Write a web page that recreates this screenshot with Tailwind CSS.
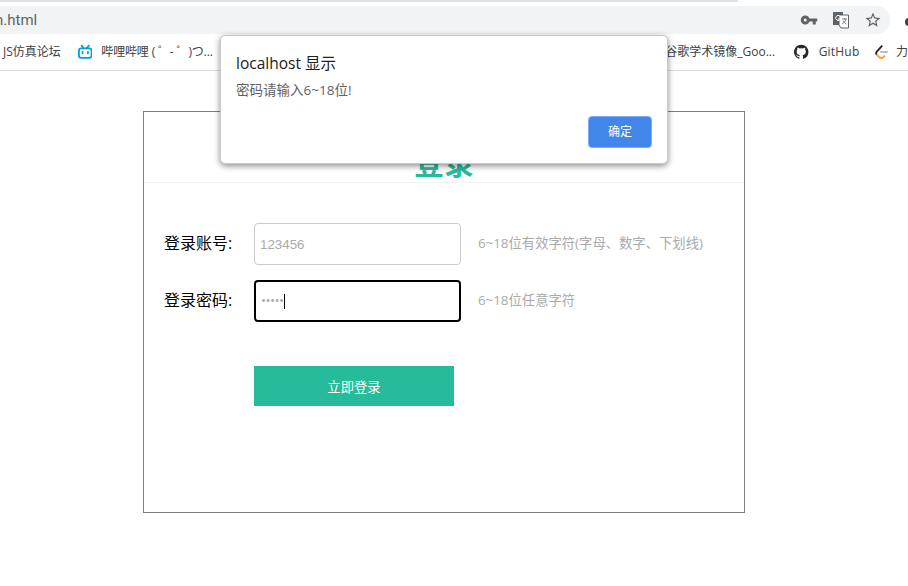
<!DOCTYPE html>
<html lang="zh-CN">
<head>
    <meta charset="UTF-8">
    <title>登录</title>
    <script src="https://cdn.jsdelivr.net/npm/@tailwindcss/browser@4"></script>
</head>
<body class="relative w-[908px] h-[586px] overflow-hidden bg-white font-['Open_Sans','Noto_Sans_CJK_SC',sans-serif]">
    <!-- browser chrome -->
    <div class="h-[71px] border-b border-[#dadce0] overflow-hidden">
        <div class="h-[2px] w-[738px] bg-[#dee1e6]"></div>
        <div class="flex mt-[4px]">
            <div class="w-[890px] shrink-0 h-[28px] bg-[#f1f3f4] rounded-r-[14px] flex items-center">
                <span class="ml-[-5px] text-[15px] font-['Roboto',sans-serif] text-[#5f6368]">n.html</span>
                <div class="ml-auto flex items-center gap-[14px] pr-[8px]">
                    <svg class="w-[18px] h-[18px]" viewBox="0 0 24 24" fill="#5f6368"><path d="M12.65 10A6 6 0 0 0 7 6a6 6 0 0 0 0 12 6 6 0 0 0 5.65-4H17v4h4v-4h2v-4H12.65zM7 14a2 2 0 1 1 0-4 2 2 0 0 1 0 4z"/></svg>
                    <svg class="w-[18px] h-[18px]" viewBox="0 0 18 18"><rect x="1" y="1" width="10" height="13" fill="#5f6368"/><path d="M7 4h9.500v13H9L7 14z" fill="#fff" stroke="#5f6368"/><path d="M10 8h5M12.500 7v1M14 8c-.5 2-2 4-4 5M11 9.500c.7 1.500 2 2.800 3.500 3.500" stroke="#5f6368" fill="none" stroke-width=".8"/><path d="M8 5.200A2.500 2.500 0 1 0 8.500 8H6" stroke="#fff" fill="none"/></svg>
                    <svg class="w-[18px] h-[18px]" viewBox="0 0 24 24" fill="#5f6368"><path d="M22 9.240l-7.190-.62L12 2 9.190 8.630 2 9.240l5.460 4.730L5.820 21 12 17.270 18.180 21l-1.630-7.030L22 9.240zM12 15.400l-3.760 2.270 1-4.280-3.320-2.880 4.380-.38L12 6.100l1.710 4.040 4.380.38-3.320 2.880 1 4.280L12 15.400z"/></svg>
                </div>
            </div>
            <div class="ml-[15px] w-[8px] h-[8px] shrink-0 mt-[12px] rounded-full bg-[#3c4043]"></div>
        </div>
        <div class="h-[36px] flex items-center text-[12px] text-[#3c4043] whitespace-nowrap">
            <span class="ml-[3px]">JS仿真论坛</span>
            <svg class="ml-[17px] w-[16px] h-[16px]" viewBox="0 0 16 16" fill="none" stroke="#00a1d6" stroke-width="2"><rect x="1" y="4" width="14" height="10.500" rx="2.500"/><path d="M4 1l2.500 3M12 1L9.500 4" stroke-linecap="round"/><path d="M5 8v1.500M11 8v1.500" stroke-linecap="round"/></svg>
            <span class="ml-[9px] w-[111px] tracking-[-0.15px]">哔哩哔哩 ( ゜- ゜)つ...</span>
            <span class="ml-[453px]">谷歌学术镜像_Goo...</span>
            <svg class="ml-[19px] w-[16px] h-[16px]" viewBox="0 0 16 16" fill="#24292e"><path d="M8 0C3.580 0 0 3.580 0 8c0 3.540 2.290 6.530 5.470 7.590.4.070.55-.17.55-.38 0-.19-.01-.82-.01-1.490-2.010.37-2.530-.49-2.690-.94-.09-.23-.48-.94-.82-1.130-.28-.15-.68-.52-.01-.53.630-.01 1.080.58 1.230.82.720 1.210 1.870.870 2.330.66.070-.52.280-.87.510-1.070-1.780-.2-3.640-.89-3.640-3.950 0-.87.31-1.590.82-2.150-.08-.2-.36-1.020.08-2.120 0 0 .67-.21 2.200.82a7.500 7.500 0 0 1 4 0c1.530-1.040 2.200-.82 2.200-.82.44 1.100.16 1.920.08 2.120.51.560.82 1.270.82 2.150 0 3.070-1.870 3.750-3.650 3.950.29.250.54.730.54 1.480 0 1.070-.01 1.930-.01 2.200 0 .21.150.46.550.38A8.010 8.010 0 0 0 16 8c0-4.420-3.580-8-8-8z"/></svg>
            <span class="ml-[10px] tracking-[0.2px]">GitHub</span>
            <svg class="ml-[16px] w-[15px] h-[16px]" viewBox="0 0 15 16" fill="none" stroke-width="2"><path d="M8 1L2 7.500c-1 1.200-1 2.500 0 3.500" stroke="#222"/><path d="M2 11l2.500 2.500c1.500 1.300 3.500 1.300 5 0l1.500-1.500" stroke="#f89f1b"/><path d="M6 8h8" stroke="#b3b3b3"/></svg>
            <span class="ml-[7px]">力</span>
        </div>
    </div>

    <!-- login card -->
    <div class="ml-[143px] mt-[40px] w-[602px] h-[402px] border border-[#808080]">
        <div class="h-[71px] border-b border-[#f2f2f2] flex items-end justify-center">
            <h1 class="text-[30px] leading-[38px] font-bold text-[#26bb9a]">登录</h1>
        </div>
        <div class="pl-[20px] pt-[40px]">
            <div class="flex items-center h-[42px]">
                <label class="w-[90px] pb-[2px] text-[16px] text-black">登录账号:</label>
                <input class="w-[207px] h-[42px] px-[5px] border border-[#ccc] rounded-[4px] text-[13.33px] outline-none font-['Liberation_Sans',sans-serif] placeholder:text-[#aaa]" placeholder="123456">
                <span class="ml-[17px] text-[13.33px] text-[#aaa]">6~18位有效字符(字母、数字、下划线)</span>
            </div>
            <div class="flex items-center h-[42px] mt-[15px]">
                <label class="w-[90px] pb-[2px] text-[16px] text-black">登录密码:</label>
                <div class="w-[207px] h-[42px] px-[5px] border-2 border-black rounded-[4px] flex items-center text-[13.33px] text-[#aaa] tracking-[-0.5px]">
                    <span>•••••</span><span class="w-px h-[15px] bg-black"></span>
                </div>
                <span class="ml-[17px] pb-[1px] text-[13.33px] text-[#aaa]">6~18位任意字符</span>
            </div>
            <button class="block ml-[90px] mt-[44px] pt-[3px] w-[200px] h-[40px] bg-[#26bb9a] text-white text-[13.33px]">立即登录</button>
        </div>
    </div>

    <!-- alert dialog -->
    <div class="absolute left-[220px] top-[35px] w-[448px] h-[129px] bg-white rounded-[5px] border border-[#c8c8c8] shadow-[0_2px_6px_rgba(0,0,0,0.45)] pl-[15px] pt-[16px] pr-[15px]">
        <div class="text-[15.5px] leading-[22px] text-[#202124]">localhost 显示</div>
        <div class="mt-[6px] text-[13.5px] leading-[20px] text-[#5f6368]">密码请输入6~18位!</div>
        <div class="flex justify-end mt-[16px]">
            <button class="w-[64px] h-[32px] bg-[#4286ea] rounded-[4px] border border-[#7baaf7] text-white text-[12px]">确定</button>
        </div>
    </div>
</body>
</html>
